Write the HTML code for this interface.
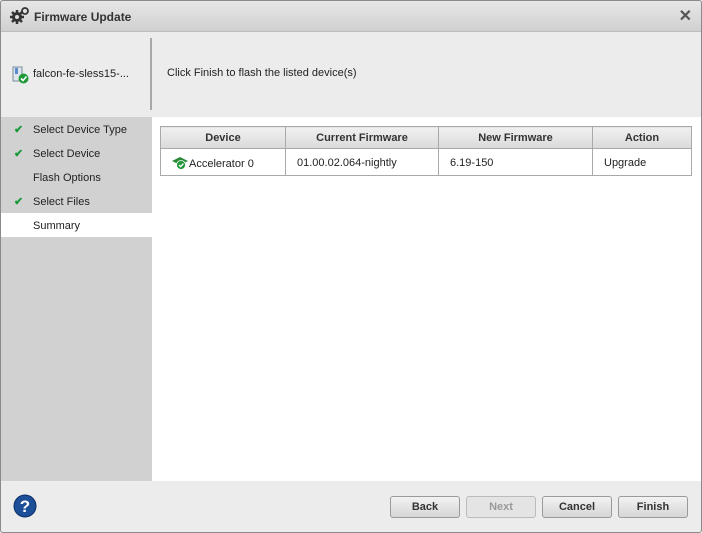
<!DOCTYPE html>
<html><head><style>
*{margin:0;padding:0;box-sizing:border-box}
body{width:702px;height:533px;background:#fff;font-family:"Liberation Sans",sans-serif;font-size:11px;color:#222;position:relative;overflow:hidden}
.win{position:absolute;left:0;top:0;width:702px;height:533px;background:#ececec}
.bord{position:absolute;left:0;top:0;width:702px;height:533px;border:1px solid #8a8a8a;border-radius:3px;pointer-events:none}
.title{position:absolute;left:0;top:0;width:702px;height:32px;background:linear-gradient(#e8e8e8,#d0d0d0);border-bottom:1px solid #bdbdbd}
.title span{position:absolute;left:34px;top:10px;font-weight:bold;font-size:12px;color:#333}
.close{position:absolute;right:10px;top:6px;font-size:16px;color:#555;font-weight:bold}
.head{position:absolute;left:0;top:32px;width:702px;height:84px;background:#ececec}
.sep{position:absolute;left:150px;top:38px;width:2px;height:72px;background:#a8a8a8}
.side{position:absolute;left:1px;top:117px;width:151px;height:364px;background:#d1d1d1}
.item{position:absolute;left:33px;font-size:11px;color:#222}
.chk{position:absolute;left:14px;color:#1a9a3a;font-weight:bold;font-size:11px}
.sum{position:absolute;left:1px;top:213px;width:151px;height:24px;background:#fff}
.main{position:absolute;left:152px;top:117px;width:549px;height:364px;background:#fff}
table{position:absolute;left:160px;top:126px;width:532px;border-collapse:collapse;font-size:11px}
th{background:linear-gradient(#f0f0f0,#dadada);height:22px;border:1px solid #a9a9a9;font-weight:bold;color:#333;text-align:center;padding-top:1px}
td{height:27px;border:1px solid #a9a9a9;padding-left:11px;padding-top:1px}
.foot{position:absolute;left:0;top:481px;width:702px;height:52px;background:#ececec}
.btn{position:absolute;top:496px;width:70px;height:22px;border:1px solid #9a9a9a;border-radius:3px;background:linear-gradient(#f2f2f2,#d6d6d6);font-weight:bold;font-size:11px;color:#333;text-align:center;line-height:20px}
</style></head><body>
<div class="win">
<div class="title">
<svg style="position:absolute;left:10px;top:7px" width="20" height="18" viewBox="0 0 20 18"><circle cx="7" cy="10" r="5" fill="#333"/><g stroke="#333" stroke-width="2.5"><line x1="7" y1="3" x2="7" y2="17"/><line x1="0" y1="10" x2="14" y2="10"/><line x1="2" y1="5" x2="12" y2="15"/><line x1="12" y1="5" x2="2" y2="15"/></g><circle cx="7" cy="10" r="2" fill="#ddd"/><circle cx="15" cy="4" r="3" fill="none" stroke="#333" stroke-width="1.8"/></svg>
<span>Firmware Update</span><div class="close">✕</div></div>
<div class="head">
<svg style="position:absolute;left:12px;top:34px" width="18" height="18" viewBox="0 0 18 18"><rect x="1" y="1" width="9" height="14" fill="#dfe6ee" stroke="#7a8a9a"/><rect x="3" y="2" width="3" height="6" fill="#5a8ad0"/><circle cx="11.5" cy="12.5" r="5" fill="#1f9a3a"/><path d="M9 12.5l2 2 3.5-4" stroke="#fff" stroke-width="1.6" fill="none"/></svg>
<div style="position:absolute;left:33px;top:36px;font-size:11px">falcon-fe-sless15-...</div>
<div style="position:absolute;left:167px;top:35px;font-size:11px">Click Finish to flash the listed device(s)</div>
</div>
<div class="sep"></div>
<div class="side"></div>
<div class="sum"></div>
<div class="chk" style="top:123px">✔</div><div class="item" style="top:124px">Select Device Type</div>
<div class="chk" style="top:147px">✔</div><div class="item" style="top:148px">Select Device</div>
<div class="item" style="top:172px">Flash Options</div>
<div class="chk" style="top:195px">✔</div><div class="item" style="top:196px">Select Files</div>
<div class="item" style="top:220px">Summary</div>
<div class="main"></div>
<table><tr><th style="width:125px">Device</th><th style="width:153px">Current Firmware</th><th style="width:154px">New Firmware</th><th>Action</th></tr>
<tr><td style="padding-left:10px"><svg width="18" height="14" viewBox="0 0 18 14" style="vertical-align:-3px"><path d="M1 5l8-4 8 4-8 4z" fill="#2a8a3a"/><circle cx="10" cy="9" r="4.5" fill="#1f9a3a" stroke="#fff" stroke-width=".8"/><path d="M8 9l1.6 1.6 2.8-3" stroke="#fff" stroke-width="1.4" fill="none"/></svg>Accelerator 0</td><td>01.00.02.064-nightly</td><td>6.19-150</td><td>Upgrade</td></tr></table>
<div class="foot"></div>
<svg style="position:absolute;left:13px;top:494px" width="24" height="24" viewBox="0 0 24 24"><circle cx="12" cy="12" r="11" fill="#1c4f98" stroke="#0c2f68"/><text x="12" y="18" text-anchor="middle" font-family="Liberation Sans" font-weight="bold" font-size="17" fill="#fff">?</text></svg>
<div class="btn" style="left:390px">Back</div>
<div class="btn" style="left:466px;color:#999;background:#e4e4e4;border-color:#bbb">Next</div>
<div class="btn" style="left:542px">Cancel</div>
<div class="btn" style="left:618px">Finish</div>
</div>
<div class="bord"></div>
</body></html>
